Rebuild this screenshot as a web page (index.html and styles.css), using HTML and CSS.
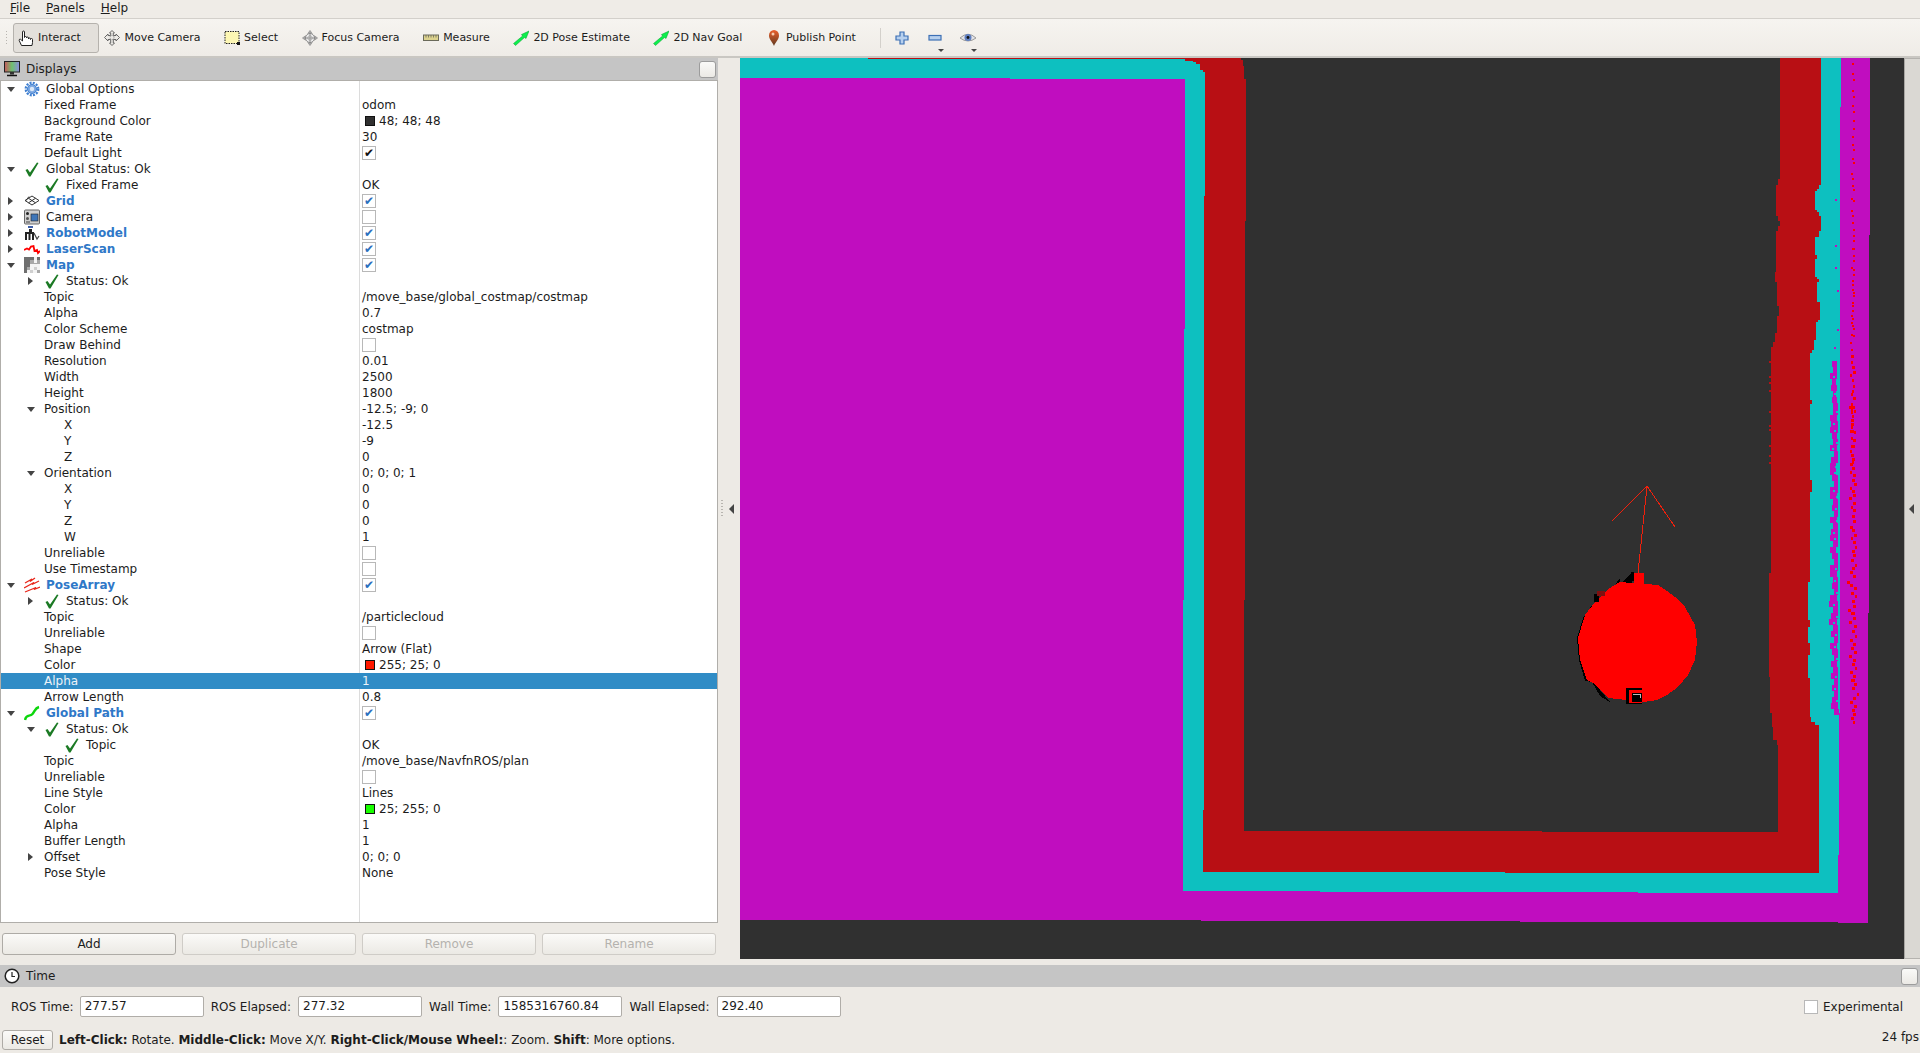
FILE: index.html
```html
<!DOCTYPE html>
<html lang="en">
<head>
    <meta charset="UTF-8">
    <title>RViz</title>
    <link rel="stylesheet" href="styles.css">
</head>
<body>
    <svg class="icon-defs" width="0" height="0">
        <defs>
            <linearGradient id="pin-grad" x1="0" y1="0" x2="0" y2="1"><stop offset="0" stop-color="#ec5f2c"/><stop offset="1" stop-color="#5e3a20"/></linearGradient>
            <linearGradient id="screen-grad" x1="0" y1="0" x2="1" y2="0"><stop offset="0" stop-color="#c8585c"/><stop offset=".5" stop-color="#6fc06f"/><stop offset="1" stop-color="#8c8ce0"/></linearGradient>
        </defs>
        <symbol id="i-hand" viewBox="0 0 16 16"><path d="M3.5 15.5 1.2 10.5Q1 8.7 2.6 9.3L4.5 11V2a1 1 0 0 1 2 0V7.5a1 1 0 0 1 2 0V8a1 1 0 0 1 2 0V9a1 1 0 0 1 2 0V9.5a1 1 0 0 1 2 0V12.5L14 15.5Z" fill="#fff" stroke="#222" stroke-width="1"/></symbol>
        <symbol id="i-move" viewBox="0 0 16 16"><path d="M8 .5 10.5 3H9.3V5.5H12V4L15.5 7.5 12 11V9.5H9.3V13H10.5L8 15.5 5.5 13H6.7V9.5H4V11L.5 7.5 4 4V5.5H6.7V3H5.5Z" fill="#eceae6" stroke="#666" stroke-width="1"/><circle cx="8" cy="7.5" r="2" fill="none" stroke="#888" stroke-dasharray="1 1"/></symbol>
        <symbol id="i-select" viewBox="0 0 16 16"><rect x="1" y="1.5" width="14" height="12" fill="#fdf7b4" stroke="#222" stroke-dasharray="1.5 1"/><rect x="13" y="12" width="3" height="3" fill="#111"/></symbol>
        <symbol id="i-focus" viewBox="0 0 18 18"><path d="M9 .5 11.5 4H6.500ZM9 17.500 6.500 14H11.500ZM.5 9 4 6.500V11.500ZM17.500 9 14 11.500V6.500Z" fill="#aaa" stroke="#888" stroke-width=".7"/><circle cx="9" cy="9" r="5" fill="#eee" stroke="#888"/><circle cx="9" cy="9" r="2.500" fill="none" stroke="#aaa"/><path d="M9 3V15M3 9H15" stroke="#777" stroke-width=".8"/></symbol>
        <symbol id="i-measure" viewBox="0 0 16 16"><rect x=".5" y="5" width="15" height="5.500" fill="#dcd28e" stroke="#6a6a5a"/><path d="M3 5V7.500M5.500 5V7.500M8 5V7.500M10.500 5V7.500M13 5V7.500" stroke="#6a6a5a" stroke-width=".8"/></symbol>
        <symbol id="i-arrow" viewBox="0 0 16 16"><path d="M.5 13.500 9.500 6 8.500 4.500 16 1 13 8.500 11.500 7.500 2.500 15.500Z" fill="#0cf04c" stroke="#0b9a30" stroke-width=".5"/></symbol>
        <symbol id="i-pin" viewBox="0 0 16 16"><path d="M8 16C6.500 12 3 9.500 3 5.500a5 5.500 0 0 1 10 0C13 9.500 9.500 12 8 16Z" fill="url(#pin-grad)"/><circle cx="7" cy="4" r="1.500" fill="#f8cdb0"/></symbol>
        <symbol id="i-plus" viewBox="0 0 16 16"><path d="M6 2H10V6H14V10H10V14H6V10H2V6H6Z" fill="#b7d0ee" stroke="#3d70b5" stroke-width="1.200"/></symbol>
        <symbol id="i-minus" viewBox="0 0 16 16"><rect x="2" y="5.500" width="12" height="4.500" fill="#b7d0ee" stroke="#3d70b5" stroke-width="1.200"/></symbol>
        <symbol id="i-eye" viewBox="0 0 16 16"><path d="M0 8Q8 .5 16 8 8 14 0 8Z" fill="#e4e4e8" stroke="#9a9a9a"/><circle cx="8" cy="7.500" r="3.500" fill="#5f7fc0"/><circle cx="8" cy="7.500" r="1.400" fill="#111"/></symbol>
        <symbol id="i-monitor" viewBox="0 0 16 16"><rect x=".5" y=".5" width="15" height="10.500" fill="url(#screen-grad)" stroke="#222"/><path d="M6 11H10V13.500H6Z" fill="#333"/><path d="M3 14.500H13" stroke="#111" stroke-width="1.500"/></symbol>
        <symbol id="i-gear" viewBox="0 0 16 16"><circle cx="8" cy="8" r="6.200" fill="none" stroke="#3f7fd0" stroke-width="2.400" stroke-dasharray="2 1.250"/><circle cx="8" cy="8" r="4.500" fill="#7da9e2" stroke="#3f7fd0"/><circle cx="8" cy="8" r="2.200" fill="#dce9f8"/></symbol>
        <symbol id="i-check" viewBox="0 0 16 16"><path d="M1.500 9 3.500 8 6 11.500 13 1.500 14.500 2 6.500 15.500 5 15.500Z" fill="#1b7a24"/></symbol>
        <symbol id="i-grid" viewBox="0 0 16 16"><path d="M8 3 15 7.500 8 12 1 7.500ZM4.500 5.300 11.500 9.800M11.500 5.300 4.500 9.800M5 3.500 1.500 8" fill="none" stroke="#333" stroke-width="1"/></symbol>
        <symbol id="i-camera" viewBox="0 0 16 16"><rect x=".5" y="1" width="15" height="14" rx="1" fill="#cfcfcf" stroke="#666"/><rect x="7" y="5" width="7" height="7" fill="#3f76b8" stroke="#222" stroke-width=".6"/><circle cx="3.500" cy="4.500" r="1.500" fill="#222"/><circle cx="3.500" cy="9.500" r="1.500" fill="#555"/><path d="M2 13H6" stroke="#444"/></symbol>
        <symbol id="i-robot" viewBox="0 0 16 16"><rect x="4" y="1" width="5" height="2" fill="#3f5fa8"/><rect x="5" y="4" width="3" height="3" fill="#222"/><rect x="1" y="7" width="9" height="8" fill="#222"/><rect x="3" y="9" width="1.500" height="6" fill="#fff"/><rect x="6.500" y="9" width="1.500" height="6" fill="#fff"/><path d="M10 8 13 14 15 11" fill="none" stroke="#444" stroke-width="1.200"/></symbol>
        <symbol id="i-laser" viewBox="0 0 16 16"><path d="M0 9 3 7.500 5 8.500 7 5.500 9.500 5 10.500 10 13 9 14 12 16 10" fill="none" stroke="#f00" stroke-width="1.800"/></symbol>
        <symbol id="i-map" viewBox="0 0 16 16"><rect width="16" height="16" fill="#f4f4f4"/><path d="M0 0H10V3H13V0H16V3H10V6H6V10H3V16H0Z" fill="#6f6f6f"/><path d="M6 3H10V6H13V3H16V7H6ZM3 10H6V13H3ZM13 13H16V16H13Z" fill="#a8a8a8"/><path d="M6 13H9V16H6ZM10 10H13V13H10Z" fill="#cfcfcf"/></symbol>
        <symbol id="i-pose" viewBox="0 0 16 16"><path d="M1 6 8 2 6 4.500 11 1M0 11 10 5.500 8 7.500 15 4M1 15 12 10.500 10 12.500 16 10" fill="none" stroke="#e8261a" stroke-width="1.300"/></symbol>
        <symbol id="i-path" viewBox="0 0 16 16"><path d="M1 15C2 9 6 12 8.500 9S11 3 15 2" fill="none" stroke="#0cd60c" stroke-width="2.400"/></symbol>
        <symbol id="i-clock" viewBox="0 0 16 16"><circle cx="8" cy="8" r="6.800" fill="#fff" stroke="#222" stroke-width="1.500"/><path d="M8 4V8.500H11" fill="none" stroke="#222" stroke-width="1.200"/></symbol>
    </svg>

    <div class="menubar">
        <span><u>F</u>ile</span>
        <span><u>P</u>anels</span>
        <span><u>H</u>elp</span>
    </div>

    <div class="toolbar">
        <div class="grip"></div>
        <div class="tool active"><svg class="ic"><use href="#i-hand"/></svg>Interact</div>
        <div class="tool"><svg class="ic"><use href="#i-move"/></svg>Move Camera</div>
        <div class="tool"><svg class="ic"><use href="#i-select"/></svg>Select</div>
        <div class="tool"><svg class="ic"><use href="#i-focus"/></svg>Focus Camera</div>
        <div class="tool"><svg class="ic"><use href="#i-measure"/></svg>Measure</div>
        <div class="tool"><svg class="ic"><use href="#i-arrow"/></svg>2D Pose Estimate</div>
        <div class="tool"><svg class="ic"><use href="#i-arrow"/></svg>2D Nav Goal</div>
        <div class="tool"><svg class="ic"><use href="#i-pin"/></svg>Publish Point</div>
        <div class="sep"></div>
        <div class="mini"><svg class="ic"><use href="#i-plus"/></svg></div>
        <div class="mini drop"><svg class="ic"><use href="#i-minus"/></svg></div>
        <div class="mini drop"><svg class="ic"><use href="#i-eye"/></svg></div>
    </div>

    <div class="main">
        <div class="displays">
            <div class="panel-title">
                <svg class="ic"><use href="#i-monitor"/></svg>
                <span>Displays</span>
                <div class="float-btn"></div>
            </div>
            <div class="tree">
                <div class="row"><div class="name i0"><span class="tw down"></span><svg class="ic"><use href="#i-gear"/></svg><span>Global Options</span></div><div class="value"></div></div>
                <div class="row"><div class="name i1"><span class="tw"></span><span>Fixed Frame</span></div><div class="value">odom</div></div>
                <div class="row"><div class="name i1"><span class="tw"></span><span>Background Color</span></div><div class="value"><span class="swatch dark"></span>48; 48; 48</div></div>
                <div class="row"><div class="name i1"><span class="tw"></span><span>Frame Rate</span></div><div class="value">30</div></div>
                <div class="row"><div class="name i1"><span class="tw"></span><span>Default Light</span></div><div class="value"><span class="cb black">&#10004;</span></div></div>
                <div class="row"><div class="name i0"><span class="tw down"></span><svg class="ic"><use href="#i-check"/></svg><span>Global Status: Ok</span></div><div class="value"></div></div>
                <div class="row"><div class="name i1"><span class="tw"></span><svg class="ic"><use href="#i-check"/></svg><span>Fixed Frame</span></div><div class="value">OK</div></div>
                <div class="row"><div class="name i0"><span class="tw right"></span><svg class="ic"><use href="#i-grid"/></svg><b>Grid</b></div><div class="value"><span class="cb">&#10004;</span></div></div>
                <div class="row"><div class="name i0"><span class="tw right"></span><svg class="ic"><use href="#i-camera"/></svg><span>Camera</span></div><div class="value"><span class="cb"></span></div></div>
                <div class="row"><div class="name i0"><span class="tw right"></span><svg class="ic"><use href="#i-robot"/></svg><b>RobotModel</b></div><div class="value"><span class="cb">&#10004;</span></div></div>
                <div class="row"><div class="name i0"><span class="tw right"></span><svg class="ic"><use href="#i-laser"/></svg><b>LaserScan</b></div><div class="value"><span class="cb">&#10004;</span></div></div>
                <div class="row"><div class="name i0"><span class="tw down"></span><svg class="ic"><use href="#i-map"/></svg><b>Map</b></div><div class="value"><span class="cb">&#10004;</span></div></div>
                <div class="row"><div class="name i1"><span class="tw right"></span><svg class="ic"><use href="#i-check"/></svg><span>Status: Ok</span></div><div class="value"></div></div>
                <div class="row"><div class="name i1"><span class="tw"></span><span>Topic</span></div><div class="value">/move_base/global_costmap/costmap</div></div>
                <div class="row"><div class="name i1"><span class="tw"></span><span>Alpha</span></div><div class="value">0.7</div></div>
                <div class="row"><div class="name i1"><span class="tw"></span><span>Color Scheme</span></div><div class="value">costmap</div></div>
                <div class="row"><div class="name i1"><span class="tw"></span><span>Draw Behind</span></div><div class="value"><span class="cb"></span></div></div>
                <div class="row"><div class="name i1"><span class="tw"></span><span>Resolution</span></div><div class="value">0.01</div></div>
                <div class="row"><div class="name i1"><span class="tw"></span><span>Width</span></div><div class="value">2500</div></div>
                <div class="row"><div class="name i1"><span class="tw"></span><span>Height</span></div><div class="value">1800</div></div>
                <div class="row"><div class="name i1"><span class="tw down"></span><span>Position</span></div><div class="value">-12.5; -9; 0</div></div>
                <div class="row"><div class="name i2"><span class="tw"></span><span>X</span></div><div class="value">-12.5</div></div>
                <div class="row"><div class="name i2"><span class="tw"></span><span>Y</span></div><div class="value">-9</div></div>
                <div class="row"><div class="name i2"><span class="tw"></span><span>Z</span></div><div class="value">0</div></div>
                <div class="row"><div class="name i1"><span class="tw down"></span><span>Orientation</span></div><div class="value">0; 0; 0; 1</div></div>
                <div class="row"><div class="name i2"><span class="tw"></span><span>X</span></div><div class="value">0</div></div>
                <div class="row"><div class="name i2"><span class="tw"></span><span>Y</span></div><div class="value">0</div></div>
                <div class="row"><div class="name i2"><span class="tw"></span><span>Z</span></div><div class="value">0</div></div>
                <div class="row"><div class="name i2"><span class="tw"></span><span>W</span></div><div class="value">1</div></div>
                <div class="row"><div class="name i1"><span class="tw"></span><span>Unreliable</span></div><div class="value"><span class="cb"></span></div></div>
                <div class="row"><div class="name i1"><span class="tw"></span><span>Use Timestamp</span></div><div class="value"><span class="cb"></span></div></div>
                <div class="row"><div class="name i0"><span class="tw down"></span><svg class="ic"><use href="#i-pose"/></svg><b>PoseArray</b></div><div class="value"><span class="cb">&#10004;</span></div></div>
                <div class="row"><div class="name i1"><span class="tw right"></span><svg class="ic"><use href="#i-check"/></svg><span>Status: Ok</span></div><div class="value"></div></div>
                <div class="row"><div class="name i1"><span class="tw"></span><span>Topic</span></div><div class="value">/particlecloud</div></div>
                <div class="row"><div class="name i1"><span class="tw"></span><span>Unreliable</span></div><div class="value"><span class="cb"></span></div></div>
                <div class="row"><div class="name i1"><span class="tw"></span><span>Shape</span></div><div class="value">Arrow (Flat)</div></div>
                <div class="row"><div class="name i1"><span class="tw"></span><span>Color</span></div><div class="value"><span class="swatch red"></span>255; 25; 0</div></div>
                <div class="row selected"><div class="name i1"><span class="tw"></span><span>Alpha</span></div><div class="value">1</div></div>
                <div class="row"><div class="name i1"><span class="tw"></span><span>Arrow Length</span></div><div class="value">0.8</div></div>
                <div class="row"><div class="name i0"><span class="tw down"></span><svg class="ic"><use href="#i-path"/></svg><b>Global Path</b></div><div class="value"><span class="cb">&#10004;</span></div></div>
                <div class="row"><div class="name i1"><span class="tw down"></span><svg class="ic"><use href="#i-check"/></svg><span>Status: Ok</span></div><div class="value"></div></div>
                <div class="row"><div class="name i2"><span class="tw"></span><svg class="ic"><use href="#i-check"/></svg><span>Topic</span></div><div class="value">OK</div></div>
                <div class="row"><div class="name i1"><span class="tw"></span><span>Topic</span></div><div class="value">/move_base/NavfnROS/plan</div></div>
                <div class="row"><div class="name i1"><span class="tw"></span><span>Unreliable</span></div><div class="value"><span class="cb"></span></div></div>
                <div class="row"><div class="name i1"><span class="tw"></span><span>Line Style</span></div><div class="value">Lines</div></div>
                <div class="row"><div class="name i1"><span class="tw"></span><span>Color</span></div><div class="value"><span class="swatch green"></span>25; 255; 0</div></div>
                <div class="row"><div class="name i1"><span class="tw"></span><span>Alpha</span></div><div class="value">1</div></div>
                <div class="row"><div class="name i1"><span class="tw"></span><span>Buffer Length</span></div><div class="value">1</div></div>
                <div class="row"><div class="name i1"><span class="tw right"></span><span>Offset</span></div><div class="value">0; 0; 0</div></div>
                <div class="row"><div class="name i1"><span class="tw"></span><span>Pose Style</span></div><div class="value">None</div></div>
                <div class="tree-fill"><div></div><div class="tree-fill-right"></div></div>
            </div>
            <div class="tree-buttons">
                <div class="btn">Add</div>
                <div class="btn off">Duplicate</div>
                <div class="btn off">Remove</div>
                <div class="btn off">Rename</div>
            </div>
        </div>

        <div class="toggle-left">
            <div class="dots"></div>
            <div class="tri-left"></div>
        </div>

        <div class="view">
            <svg class="map" viewBox="740 58 1164 901" shape-rendering="crispEdges">
                <rect x="740" y="58" width="1164" height="901" fill="#303030"/>
                <polygon fill="#c00dbf" points="740,58 1870,58 1870,235 1869,235 1869,613 1868,613 1868,923 1838,923 1838,922 1520,922 1520,921 1201,921 1201,920 740,920"/>
                <polygon fill="#0dc0c0" points="740,58 1841,58 1841,107 1840,107 1840,713 1839,713 1839,855 1838,855 1838,893 1638,893 1638,892 1320,892 1320,891 1183,891 1183,600 1184,600 1184,329 1185,329 1185,79 1010,79 1010,78 740,78"/>
                <path stroke="#c00dbf" stroke-width="6" fill="none" d="M1832 364h5M1833 370h4M1830 376h7M1832 382h4M1831 388h6M1833 394h3M1832 400h5M1833 406h5M1833 412h5M1830 418h7M1831 424h7M1830 430h8M1832 436h5M1833 442h5M1830 448h7M1834 454h4M1831 460h7M1830 466h6M1830 472h6M1832 478h6M1834 484h4M1830 490h8M1830 496h7M1833 502h5M1832 508h6M1834 514h4M1830 520h7M1833 526h5M1831 532h7M1830 538h8M1833 544h5M1830 550h6M1832 556h6M1834 562h4M1830 568h8M1830 574h7M1833 580h5M1832 586h6M1834 592h4M1830 598h7M1829 604h9M1833 610h5M1831 616h7M1829 622h8M1833 628h5M1831 634h7M1834 640h4M1830 646h7M1832 652h6M1834 658h4M1831 664h6M1833 670h5M1831 676h7M1834 682h4M1832 688h6M1834 694h4M1832 700h6M1831 706h7M1834 712h5"/>
                <path stroke="#0dc0c0" stroke-width="2" fill="none" d="M1833 377h2M1834 431h2M1832 449h2M1835 467h2M1833 491h2M1836 521h2M1834 539h2M1835 569h2M1833 605h2M1836 617h2M1834 647h2M1835 677h2M1834 394h2M1836 412h2M1833 424h2M1836 443h2M1834 473h2M1836 497h2M1835 509h2M1833 533h2M1836 551h2M1834 581h2M1836 593h2M1833 623h2M1835 635h2M1836 659h2M1834 689h2M1836 701h2"/>
                <path stroke="#c00dbf" stroke-width="2" fill="none" d="M1835 200h2M1835 246h2M1835 268h2M1837 291h2M1837 330h2M1834 348h2"/>
                <polygon fill="#b80f14" points="868,58 1821,58 1821,185 1819,185 1819,189 1817,189 1817,191 1815,191 1815,210 1817,210 1817,212 1819,212 1819,216 1821,216 1821,231 1819,231 1819,237 1815,237 1815,255 1817,255 1817,259 1815,259 1815,277 1817,277 1817,279 1819,279 1819,282 1817,282 1817,302 1820,302 1820,320 1818,320 1818,322 1816,322 1816,340 1814,340 1814,350 1812,350 1812,353 1810,353 1810,400 1812,400 1812,404 1810,404 1810,480 1812,480 1812,492 1810,492 1810,582 1808,582 1808,620 1810,620 1810,627 1808,627 1808,643 1810,643 1810,655 1808,655 1808,678 1810,678 1810,717 1811,717 1811,722 1815,722 1815,725 1819,725 1819,873 1505,873 1505,872 1203,872 1203,810 1204,810 1204,196 1205,196 1205,72 1203,72 1203,70 1200,70 1200,64 1196,64 1196,62 1193,62 1193,61 1185,61 1185,59 868,59"/>
                <polygon fill="#303030" points="1241,58 1780,58 1780,179 1778,179 1778,185 1776,185 1776,216 1778,216 1778,221 1780,221 1780,226 1778,226 1778,231 1776,231 1776,272 1775,272 1775,282 1777,282 1777,306 1779,306 1779,316 1777,316 1777,333 1775,333 1775,342 1773,342 1773,347 1771,347 1771,573 1769,573 1769,677 1770,677 1770,713 1772,713 1772,727 1773,727 1773,740 1777,740 1777,745 1778,745 1778,832 1542,832 1542,831 1244,831 1244,600 1245,600 1245,221 1246,221 1246,79 1244,79 1244,66 1243,66 1243,60 1241,60"/>
                <path stroke="#b80f14" stroke-width="2" fill="none" d="M1769 362h2M1769 377h2M1769 383h2M1769 391h2M1769 412h2M1769 426h2M1769 430h2M1769 446h2M1769 456h2M1769 463h2"/>
                <path stroke="#f00" stroke-width="2" fill="none" d="M1852 64h2M1852 74h2M1853 80h2M1852 91h2M1853 97h2M1852 106h2M1853 112h2M1853 121h2M1853 129h2M1852 137h2M1852 145h2M1853 150h2M1852 159h2M1853 163h2M1851 174h2M1852 179h2M1852 186h2M1853 190h2M1851 199h2M1853 201h2M1851 211h2M1852 216h2M1852 223h2M1853 230h2M1853 236h2M1853 241h2M1852 249h3M1853 256h2M1853 261h2M1851 268h2M1853 270h2M1853 275h2M1852 281h2M1852 285h2M1852 290h2M1853 293h2M1853 296h2M1852 303h2M1852 306h2M1852 311h2M1851 316h2M1852 319h2M1851 323h2M1852 326h2M1853 329h2M1851 335h2M1853 336h2M1850 343h2M1851 350h2"/>
                <path stroke="#f00" stroke-width="3" fill="none" d="M1851 356h3M1851 362h2M1852 367h3M1853 372h3M1850 375h2M1852 380h2M1853 386h2M1852 391h2M1851 394h2M1853 398h3M1851 404h2M1851 410h2M1854 398h2M1849 407h3M1852 407h3M1854 411h2M1851 412h2M1852 416h2M1851 420h3M1851 424h3M1851 427h2M1850 431h4M1854 432h2M1851 438h2M1853 440h3M1851 446h4M1850 451h2M1851 455h3M1852 459h3M1852 462h2M1850 464h3M1852 468h3M1850 472h2M1853 475h3M1852 480h3M1854 484h3M1850 488h2M1852 491h3M1853 495h3M1849 498h3M1853 503h3M1851 507h2M1853 510h3M1852 516h3M1853 521h3M1850 527h3M1852 530h3M1854 535h3M1851 538h2M1853 542h3M1855 547h2M1852 551h3M1853 555h3M1851 560h3M1855 565h2M1852 568h3M1850 572h3M1853 576h3M1847 582h3M1850 585h3M1854 588h3M1851 593h3M1855 596h2M1852 601h3M1853 606h3M1848 610h3M1851 613h4M1853 618h3M1849 622h3M1854 626h3M1852 631h3M1855 636h2M1850 640h3M1853 644h3M1851 648h3M1854 652h3M1849 656h3M1853 660h3M1852 664h3M1855 668h2M1850 672h3M1853 676h3M1851 680h4M1854 684h3M1852 688h3M1857 694h2M1853 698h3M1850 702h3M1854 706h3M1852 710h3M1853 714h3M1851 718h3M1853 722h2"/>
                <path d="M1647 486 1612 521M1647 486 1675 527M1647 486 1638 573" stroke="#f0200c" stroke-width="1" fill="none"/>
                <polygon fill="#000" points="1617,581 1620,578 1620,584 1632,572 1632,584 1610,592 1593,604 1583,618 1577,638 1579,660 1585,681 1592,682 1600,696 1610,702 1600,690 1595,680 1590,670"/>
                <polygon fill="#f00" points="1620,582 1658,585 1667,591 1675,597 1685,607 1695,625 1697,642 1695,660 1688,675 1678,687 1667,695 1657,700 1643,702 1627,700 1608,698 1593,683 1587,680 1580,660 1578,638 1585,615 1595,602 1610,588"/>
                <rect x="1634" y="573" width="10" height="11" fill="#f00"/>
                <rect x="1631" y="572" width="3" height="9" fill="#000"/>
                <rect x="1594" y="594" width="5" height="8" fill="#000"/>
                <rect x="1597" y="591" width="8" height="5" fill="#801010"/>
                <rect x="1626" y="688" width="16" height="16" fill="#000"/>
                <rect x="1629" y="690" width="13" height="13" fill="#f00"/>
                <rect x="1632" y="693" width="10" height="9" fill="#000"/>
                <path d="M1633 694h7v4" stroke="#bbb" fill="none"/>
            </svg>
        </div>

        <div class="toggle-right">
            <div class="tri-left"></div>
        </div>
    </div>

    <div class="time-panel">
        <div class="panel-title">
            <svg class="ic"><use href="#i-clock"/></svg>
            <span>Time</span>
            <div class="float-btn"></div>
        </div>
        <div class="time-row">
            <label>ROS Time:</label><div class="field">277.57</div>
            <label>ROS Elapsed:</label><div class="field">277.32</div>
            <label>Wall Time:</label><div class="field">1585316760.84</div>
            <label>Wall Elapsed:</label><div class="field">292.40</div>
            <div class="experimental"><span class="cb"></span>Experimental</div>
        </div>
    </div>

    <div class="statusbar">
        <div class="btn reset">Reset</div>
        <div class="hint"><b>Left-Click:</b> Rotate. <b>Middle-Click:</b> Move X/Y. <b>Right-Click/Mouse Wheel:</b>: Zoom. <b>Shift</b>: More options.</div>
        <div class="fps">24 fps</div>
    </div>
</body>
</html>
```

FILE: styles.css
```css
* {
    box-sizing: border-box;
}

body {
    font-family: "DejaVu Sans", sans-serif;
    font-size: 12px;
    color: #1c1c1c;
    margin: 0;
    width: 1920px;
    height: 1053px;
    overflow: hidden;
    background-color: #edeae5;
    display: flex;
    flex-direction: column;
}

.icon-defs {
    display: block;
    height: 0;
}

.ic {
    width: 16px;
    height: 16px;
    flex: none;
}

/* menu + toolbar */
.menubar {
    height: 19px;
    padding-left: 10px;
    display: flex;
    gap: 16px;
    align-items: center;
    padding-bottom: 3px;
    background-color: #efece7;
    border-bottom: 1px solid #d3d0cb;
}

.toolbar {
    height: 39px;
    display: flex;
    align-items: center;
    padding-left: 5px;
    font-size: 11px;
    background: linear-gradient(#f6f4f0, #efece7);
    border-bottom: 2px solid #c9c7c2;
}

.grip {
    width: 3px;
    height: 16px;
    margin-right: 5px;
    background-image: radial-gradient(#b8b5b0 40%, transparent 45%);
    background-size: 3px 3px;
}

.tool {
    height: 30px;
    display: flex;
    align-items: center;
    gap: 4px;
    padding: 0 17.5px 0 4px;
    border: 1px solid transparent;
    white-space: nowrap;
}

.tool.active {
    background-color: #e3e0db;
    border-color: #b5b2ad;
    border-radius: 3px;
}

.sep {
    width: 1px;
    height: 20px;
    margin: 0 8px 0 6px;
    background-color: #d3d0cb;
}

.mini {
    width: 33px;
    padding-left: 5px;
    height: 30px;
    display: flex;
    align-items: center;
    position: relative;
}

.mini.drop::after {
    content: "";
    position: absolute;
    right: 11px;
    bottom: 1px;
    border-top: 3px solid #444;
    border-left: 3px solid transparent;
    border-right: 3px solid transparent;
}

/* main area */
.main {
    height: 907px;
    display: flex;
}

.displays {
    width: 718px;
    display: flex;
    flex-direction: column;
}

.panel-title {
    height: 22px;
    flex: none;
    display: flex;
    align-items: center;
    gap: 6px;
    padding-left: 4px;
    background-color: #c5c5c5;
}

.float-btn {
    width: 17px;
    height: 17px;
    margin-left: auto;
    margin-right: 2px;
    background: linear-gradient(#fafaf8, #ebe9e5);
    border: 1px solid #9c9c9c;
    border-radius: 3px;
}

.tree {
    height: 843px;
    flex: none;
    display: flex;
    flex-direction: column;
    background-color: #fff;
    border: 1px solid #b0aeaa;
}

.row {
    height: 16px;
    flex: none;
    display: flex;
    line-height: 16px;
}

.name {
    width: 359px;
    flex: none;
    display: flex;
    align-items: center;
    white-space: nowrap;
    border-right: 1px solid #dcdcdc;
}

.name .ic {
    margin-right: 6px;
}

.name b {
    color: #2f78c8;
}

.i0 {
    padding-left: 0;
}

.i1 {
    padding-left: 20px;
}

.i2 {
    padding-left: 40px;
}

.tw {
    width: 23px;
    flex: none;
    display: flex;
    align-items: center;
}

.tw.right::before {
    content: "";
    margin-left: 7px;
    border-left: 5px solid #444;
    border-top: 4px solid transparent;
    border-bottom: 4px solid transparent;
}

.tw.down::before {
    content: "";
    margin-left: 6px;
    border-top: 5px solid #444;
    border-left: 4.5px solid transparent;
    border-right: 4.5px solid transparent;
}

.value {
    flex: 1;
    padding-left: 2px;
    display: flex;
    align-items: center;
    white-space: nowrap;
}

.selected {
    background-color: #308cc6;
    color: #eef3f8;
}

.selected .name {
    border-right-color: #308cc6;
}

.tree-fill {
    flex: 1;
    display: flex;
}

.tree-fill div:first-child {
    width: 359px;
    border-right: 1px solid #dcdcdc;
}

.cb {
    width: 14px;
    height: 14px;
    flex: none;
    display: flex;
    align-items: center;
    justify-content: center;
    font-size: 12px;
    line-height: 12px;
    color: #2a6fbe;
    background-color: #fff;
    border: 1px solid #b8b8b8;
}

.cb.black {
    color: #111;
}

.swatch {
    width: 10px;
    height: 10px;
    margin: 0 4px 0 3px;
    border: 1px solid #111;
}

.swatch.dark {
    background-color: #303030;
}

.swatch.red {
    background-color: #ff1900;
}

.swatch.green {
    background-color: #19ff00;
}

.tree-buttons {
    display: flex;
    gap: 6px;
    padding: 10px 2px 0;
}

.btn {
    width: 174px;
    height: 22px;
    display: flex;
    align-items: center;
    justify-content: center;
    background: linear-gradient(#fbfaf8, #ebe9e4);
    border: 1px solid #aeaba6;
    border-radius: 3px;
}

.btn.off {
    color: #b4b2ae;
    border-color: #cfccc7;
}

.toggle-left {
    width: 22px;
    height: 901px;
    padding-left: 3px;
    display: flex;
    align-items: center;
    gap: 6px;
}

.dots {
    width: 2px;
    height: 17px;
    background-image: linear-gradient(#b8b5b0 50%, transparent 50%);
    background-size: 2px 3px;
}

.tri-left {
    border-right: 5px solid #444;
    border-top: 5px solid transparent;
    border-bottom: 5px solid transparent;
}

.view {
    width: 1164px;
    height: 901px;
}

.map {
    display: block;
    width: 1164px;
    height: 901px;
}

.toggle-right {
    width: 16px;
    height: 901px;
    display: flex;
    align-items: center;
    padding-left: 4px;
    background-color: #dad8d3;
    border-left: 1px solid #a8a6a2;
    border-top: 1px solid #b5b3af;
    border-bottom: 1px solid #b5b3af;
}

/* time panel */
.time-panel {
    height: 65px;
    flex: none;
}

.time-row {
    height: 21px;
    margin-top: 9px;
    padding-left: 11px;
    display: flex;
    align-items: center;
}

.time-row label:first-child {
    margin-right: -1px;
}

.field {
    width: 124px;
    height: 21px;
    margin: 0 7px;
    padding-left: 4px;
    line-height: 19px;
    background-color: #fff;
    border: 1px solid #b0ada8;
    border-radius: 2px;
}

.experimental {
    margin-left: auto;
    padding-right: 17px;
    display: flex;
    align-items: center;
    gap: 5px;
}

.statusbar {
    flex: 1;
    display: flex;
    padding-left: 2px;
}

.btn.reset {
    width: 51px;
    height: 20px;
}

.hint {
    margin-left: 6px;
    height: 20px;
    line-height: 20px;
}

.fps {
    margin-left: auto;
    padding-right: 1px;
    line-height: 14px;
}
```
